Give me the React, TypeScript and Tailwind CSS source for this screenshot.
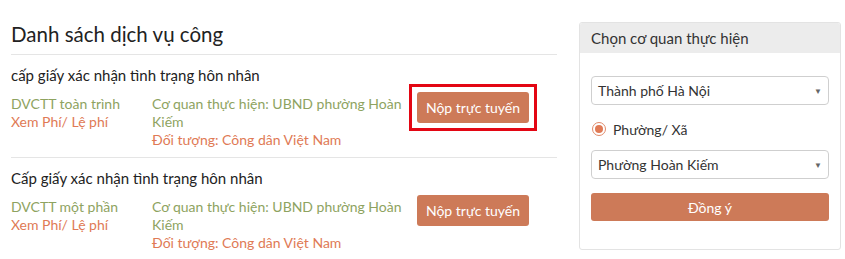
import React from "react";

const font = { fontFamily: "Lato, 'Noto Sans', sans-serif" };

function Item({ title, kind, boxed }: { title: string; kind: string; boxed?: boolean }) {
  return (
    <div className="pt-[10px] pb-[8px]">
      <div className="text-[15px] leading-[20px] text-[#222]">{title}</div>
      <div className="mt-[10px] flex items-start text-[14px] leading-[18px]">
        <div className="w-[141px] shrink-0">
          <div className="text-[#8ea35f]">{kind}</div>
          <div className="text-[#e07a55]">Xem Phí/ Lệ phí</div>
        </div>
        <div className="w-[257px] shrink-0">
          <div className="text-[#8ea35f]">Cơ quan thực hiện: UBND phường Hoàn Kiếm</div>
          <div className="text-[#e07a55]">Đối tượng: Công dân Việt Nam</div>
        </div>
        <div
          className={
            "-mt-[11px] border-[3px] p-[5px] " +
            (boxed ? "border-[#e30613]" : "border-transparent")
          }
        >
          <button className="w-[112px] h-[31px] rounded-[3px] bg-[#cd7a58] text-white text-[14px]">
            Nộp trực tuyến
          </button>
        </div>
      </div>
    </div>
  );
}

function Select({ value }: { value: string }) {
  return (
    <div className="h-[29px] border border-[#cfcfcf] rounded-[4px] flex items-center justify-between pl-[6px] pr-[6px] text-[14px] text-[#333]">
      <span>{value}</span>
      <span className="text-[8px] text-[#666]">▼</span>
    </div>
  );
}

export default function App() {
  return (
    <div className="w-[845px] h-[259px] bg-white flex pl-[11px] pt-[22px]" style={font}>
      <div className="w-[546px] shrink-0">
        <div className="text-[20.5px] leading-[25px] text-[#222] pb-[7px] border-b border-[#e5e5e5]">
          Danh sách dịch vụ công
        </div>
        <div className="border-b border-[#e5e5e5]">
          <Item title="cấp giấy xác nhận tình trạng hôn nhân" kind="DVCTT toàn trình" boxed />
        </div>
        <Item title="Cấp giấy xác nhận tình trạng hôn nhân" kind="DVCTT một phần" />
      </div>
      <div className="ml-[22px] w-[262px] h-[228px] border border-[#e3e3e3] rounded-[3px] overflow-hidden">
        <div className="h-[30px] bg-[#ececec] flex items-center px-[11px] text-[15px] text-[#333]">
          Chọn cơ quan thực hiện
        </div>
        <div className="px-[11px] pt-[23px]">
          <Select value="Thành phố Hà Nội" />
          <div className="flex items-center mt-[13px] h-[22px]">
            <span className="ml-[1px] w-[14px] h-[14px] rounded-full border-[1.5px] border-[#e08a6a] flex items-center justify-center">
              <span className="w-[8px] h-[8px] rounded-full bg-[#e07a55]" />
            </span>
            <span className="ml-[7px] text-[14px] text-[#333]">Phường/ Xã</span>
          </div>
          <div className="mt-[10px]">
            <Select value="Phường Hoàn Kiếm" />
          </div>
          <button className="mt-[14px] w-full h-[28px] rounded-[3px] bg-[#cd7a58] text-white text-[14px]">
            Đồng ý
          </button>
        </div>
      </div>
    </div>
  );
}
